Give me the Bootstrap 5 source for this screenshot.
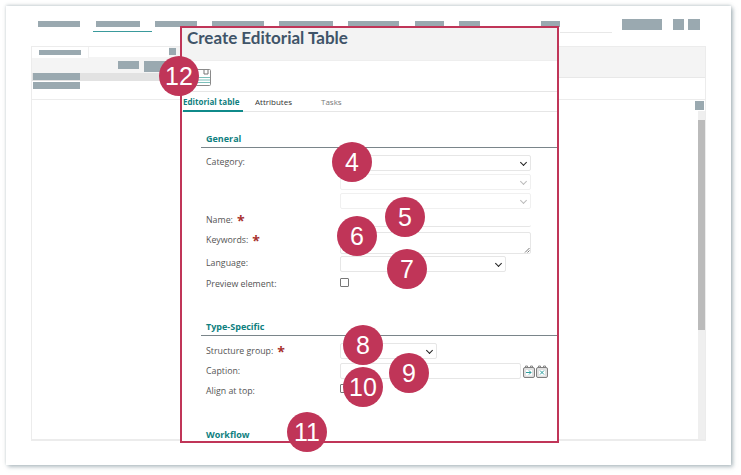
<!DOCTYPE html>
<html lang="en"><head><meta charset="utf-8"><title>Create Editorial Table</title>
<link href="https://cdn.jsdelivr.net/npm/bootstrap@5.3.0/dist/css/bootstrap.min.css" rel="stylesheet">
<style>
html,body{height:100%;background:#fff;overflow:hidden}
body{font-family:"Open Sans",sans-serif;color:#444}
.app-window{position:relative;width:725px;height:459px;margin:6px 0 0 6px;background:#fff;box-shadow:2px 2px 4px rgba(120,140,150,.55),0 -1px 3px rgba(120,140,150,.35)}
.blk{display:block;background:#9aa9b0;flex:none}
.topnav{height:38px;padding:15px 0 0 32px}
.nav-item-bar{height:6px;margin-right:15px}
.nav-under{position:relative;margin-left:1px}
.nav-under::after{content:"";position:absolute;left:-3px;right:-12px;top:10px;height:1px;background:#3a9a9c}
.search-line{width:52px;height:1px;background:#e8e8e8;margin-top:11px;margin-left:-15px;margin-right:10px}
.top-btn{height:11px;margin-top:-2px}
.frame{margin:2px 25px 0;height:395px;border:1px solid #ececec;border-bottom-width:2px;position:relative}
.frame-tabs{height:11px;background:#f4f4f4}
.frame-tab{width:57px;height:11px;background:#fff;border-right:1px solid #f0f0f0;padding:3px 0 0 7px}
.frame-field{width:80px;height:10px;background:#fff}
.frame-tools{height:20px;background:#f4f4f4;border-bottom:1px solid #e8e8e8;justify-content:flex-start;padding:3px 0 0 86px;gap:5px}
.tree-row{width:148px;height:8px;background:#e2e2e2;margin-top:-5px;position:relative;padding-left:1px}
.frame-bar2{position:absolute;left:0;right:0;top:52px;border-top:1px solid #ececec}
.frame-sq{position:absolute;right:1px;top:54px;width:9px;height:9px}
.scroll-track{position:absolute;right:0;top:64px;bottom:0;width:7px;background:#efefef}
.scroll-thumb{height:210px;margin-top:9px;background:#bbb}
.dialog-box{position:absolute;left:174px;top:20px;width:379px;height:417px;border:2px solid #c03558;background:#fff;overflow:hidden}
.dlg-head{height:33px;background:#f3f3f3;border-bottom:1px solid #eee;padding:0 5px}
.dlg-title{font:700 17px/20px "Lato",sans-serif;color:#3f5468;margin:0}
.dlg-tools{height:31px;border-bottom:1px solid #e6e6e6;padding:8px 0 0 13px}
.dlg-tools svg{display:block}
.dlg-tabs{height:20px;border-bottom:1px solid #e6e6e6;font-size:8px;line-height:20px;padding-left:1px;color:#333}
.dlg-tab{width:67px;padding-left:1px}
.dlg-tab-active{width:60px;margin-right:11px;color:#0f7f7f;font-weight:700;border-bottom:2px solid #0f8a8a;height:20px}
.dlg-tab-muted{color:#777}
.dlg-form{padding:18px 0 0 19px;font-size:8.8px;color:#555}
.sec-title{font-size:9px;font-weight:700;color:#0f7f7f;padding-left:5px;line-height:17px;height:18px;border-bottom:1px solid #7a858a;margin:0}
.field{display:flex;padding-left:5px;height:20px}
.field-name{width:134px;flex:none;line-height:13px;padding-top:1px}
.pad2{padding-top:2px}
.req{color:#a8322f;font-size:14px;line-height:9px;font-weight:700;margin-left:4px;vertical-align:-3px}
.ctl{height:16px;border:1px solid #e6e6e6;border-radius:2px;position:relative;flex:none;background:#fff}
.caret::after{content:"";position:absolute;right:4px;top:4px;width:5px;height:5px;border:solid #222;border-width:0 1.5px 1.5px 0;transform:rotate(45deg)}
.off{border-color:#f0f0f0}.off::after{border-color:#bbb}
.w-full{width:191px}
.box-check{width:9px;height:9px;border:1px solid #777;border-radius:1px;margin-top:1px;display:block}
.mini-ic{margin-left:2px;margin-top:2px}
.mini-ic2{margin-left:1px;margin-top:2px}
.badge-num{position:absolute;width:40px;height:40px;border-radius:50%;background:#c03558;color:#fff;font:400 25px/40px "Liberation Sans",sans-serif;text-align:center;z-index:3}
.row-19{height:19px}.row-24{height:24px}.row-21{height:21px}
.gap-7{height:7px}.gap-21{height:21px}.gap-19{height:19px}
.name-line{height:15px;border-width:0 0 1px;width:191px}
.area-ctl{height:22px;width:191px}
</style></head><body>
<div class="app-window">
 <div class="topnav d-flex">
  <span class="blk nav-item-bar" style="width:42px"></span>
  <span class="blk nav-item-bar nav-under" style="width:44px"></span>
  <span class="blk nav-item-bar" style="width:42px"></span>
  <span class="blk nav-item-bar" style="width:52px"></span>
  <span class="blk nav-item-bar" style="width:54px"></span>
  <span class="blk nav-item-bar" style="width:51px;margin-right:16px"></span>
  <span class="blk nav-item-bar" style="width:29px"></span>
  <span class="blk nav-item-bar" style="width:21px;margin-right:61px"></span>
  <span class="blk nav-item-bar" style="width:19px"></span>
  <span class="search-line"></span>
  <span class="blk top-btn" style="width:40px;margin-right:11px"></span>
  <span class="blk top-btn" style="width:11px;margin-right:4px"></span>
  <span class="blk top-btn" style="width:12px"></span>
 </div>
 <div class="frame">
  <div class="frame-tabs d-flex"><div class="frame-tab"><span class="blk" style="width:42px;height:5px"></span></div><div class="frame-field"></div><span class="blk" style="width:7px;height:7px;margin-top:1px"></span></div>
  <div class="frame-tools d-flex"><span class="blk" style="width:21px;height:8px"></span><span class="blk" style="width:36px;height:11px"></span></div>
  <div class="tree-row"><span class="blk" style="width:47px;height:7px"></span></div>
  <span class="blk" style="width:47px;height:7px;margin-top:1px;margin-left:1px"></span>
  <div class="frame-bar2"></div>
  <span class="blk frame-sq"></span>
  <div class="scroll-track"><div class="scroll-thumb"></div></div>
 </div>
 <div class="dialog-box">
  <div class="dlg-head"><h1 class="dlg-title">Create Editorial Table</h1></div>
  <div class="dlg-tools">
   <svg width="16" height="17" viewBox="0 0 16 17"><rect x=".5" y=".5" width="15" height="16" rx="1" fill="#fff" stroke="#8a8a8a"/><path d="M1 8.500h14M1 11h14M1 13.500h14" stroke="#7cc0bb"/><path d="M9 1v4h4V1" fill="none" stroke="#777"/></svg>
  </div>
  <div class="dlg-tabs d-flex">
   <div class="dlg-tab-active">Editorial table</div>
   <div class="dlg-tab">Attributes</div>
   <div class="dlg-tab-muted">Tasks</div>
  </div>
  <div class="dlg-form">
   <div class="sec-title">General</div>
   <div class="gap-7"></div>
   <div class="field row-19"><span class="field-name">Category:</span><span class="ctl caret w-full"></span></div>
   <div class="field row-19"><span class="field-name"></span><span class="ctl caret off w-full"></span></div>
   <div class="field row-19"><span class="field-name"></span><span class="ctl caret off w-full"></span></div>
   <div class="field"><span class="field-name pad2">Name:<span class="req">*</span></span><span class="ctl name-line"></span></div>
   <div class="field row-24"><span class="field-name pad2">Keywords:<span class="req">*</span></span><span class="ctl area-ctl"><svg class="position-absolute end-0 bottom-0" width="6" height="6" viewBox="0 0 6 6"><path d="M1 5.500 5.500 1M3.500 5.500l2-2" stroke="#777"/></svg></span></div>
   <div class="field row-21"><span class="field-name">Language:</span><span class="ctl caret" style="width:166px"></span></div>
   <div class="field"><span class="field-name">Preview element:</span><span class="box-check"></span></div>
   <div class="gap-21"></div>
   <div class="sec-title">Type-Specific</div>
   <div class="gap-7"></div>
   <div class="field"><span class="field-name pad2">Structure group:<span class="req">*</span></span><span class="ctl caret" style="width:97px"></span></div>
   <div class="field"><span class="field-name pad2">Caption:</span><span class="ctl" style="width:181px"></span>
    <svg class="mini-ic" width="12" height="13" viewBox="0 0 12 13"><path d="M2.500 2.500V1h2v1.500M7.500 2.500V1h2v1.500" fill="none" stroke="#888"/><rect x=".5" y="2.500" width="11" height="10" rx="1.500" fill="#e0e0e0" stroke="#808080"/><rect x="3" y="5" width="6" height="5.500" fill="#fff"/><path d="M3 7.500h5M6 5.500l2 2-2 2" fill="none" stroke="#2e9f9f"/></svg>
    <svg class="mini-ic2" width="12" height="13" viewBox="0 0 12 13"><path d="M2.500 2.500V1h2v1.500M7.500 2.500V1h2v1.500" fill="none" stroke="#888"/><rect x=".5" y="2.500" width="11" height="10" rx="1.500" fill="#e0e0e0" stroke="#808080"/><rect x="3" y="5" width="6" height="5.500" fill="#fff"/><path d="M4 5.500l4 4M8 5.500l-4 4" stroke="#2e9f9f"/></svg></div>
   <div class="field row-24"><span class="field-name pad2">Align at top:</span><span class="box-check"></span></div>
   <div class="gap-19"></div>
   <div class="sec-title border-0">Workflow</div>
  </div>
 </div>
 <span class="badge-num" style="left:153px;top:50px">12</span>
 <span class="badge-num" style="left:326px;top:136px">4</span>
 <span class="badge-num" style="left:379px;top:191px">5</span>
 <span class="badge-num" style="left:331px;top:210px">6</span>
 <span class="badge-num" style="left:381px;top:243px">7</span>
 <span class="badge-num" style="left:337px;top:319px">8</span>
 <span class="badge-num" style="left:383px;top:347px">9</span>
 <span class="badge-num" style="left:337px;top:361px">10</span>
 <span class="badge-num" style="left:281px;top:406px">11</span>
</div>
</body></html>
